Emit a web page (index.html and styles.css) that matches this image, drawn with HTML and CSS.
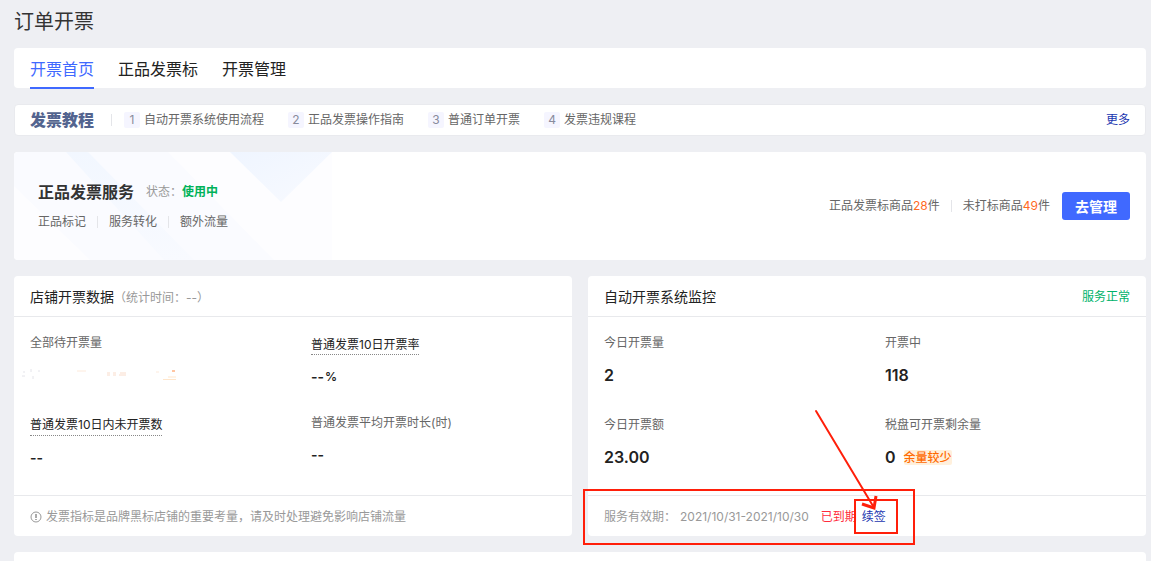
FILE: index.html
```html
<!DOCTYPE html>
<html lang="zh-CN">
  <head>
    <meta charset="utf-8">
    <title>订单开票</title>
    <link rel="stylesheet" href="styles.css">
  </head>
  <body>
    <h1 class="page-title">订单开票</h1>

    <nav class="tabs card">
      <a href="#" class="tab active">开票首页</a>
      <a href="#" class="tab">正品发票标</a>
      <a href="#" class="tab">开票管理</a>
    </nav>

    <div class="guide card">
      <span class="guide-title">发票教程</span>
      <span class="divider guide-divider"></span>
      <div class="guide-list">
        <a href="#" class="guide-item"><span class="guide-number">1</span>自动开票系统使用流程</a>
        <a href="#" class="guide-item"><span class="guide-number">2</span>正品发票操作指南</a>
        <a href="#" class="guide-item"><span class="guide-number">3</span>普通订单开票</a>
        <a href="#" class="guide-item"><span class="guide-number">4</span>发票违规课程</a>
      </div>
      <a href="#" class="link">更多</a>
    </div>

    <section class="service card">
      <svg class="service-art" width="318" height="108" viewBox="0 0 318 108" aria-hidden="true">
        <defs>
          <linearGradient id="band" x1="0" y1="0" x2="0" y2="1">
            <stop offset="0" stop-color="#f2f7ff"/>
            <stop offset="1" stop-color="#f8faff"/>
          </linearGradient>
          <linearGradient id="corner" x1="0" y1="0" x2="1" y2="1">
            <stop offset="0" stop-color="#eff5ff"/>
            <stop offset="1" stop-color="#f8faff"/>
          </linearGradient>
        </defs>
        <path d="M0 0H318V108H0Z" fill="#fdfdff"/>
        <path d="M0 0H154L260 108H76L0 34Z" fill="#fafbff"/>
        <path d="M52 0H74L180 108H150Z" fill="url(#band)"/>
        <path d="M216 0H318L267 50Z" fill="url(#corner)"/>
      </svg>
      <div class="service-info">
        <div class="service-head">
          <h2 class="service-title">正品发票服务</h2>
          <span class="muted">状态：</span>
          <span class="status">使用中</span>
        </div>
        <div class="service-tags">
          <span>正品标记</span>
          <span class="divider"></span>
          <span>服务转化</span>
          <span class="divider"></span>
          <span>额外流量</span>
        </div>
      </div>
      <div class="service-count">
        <span>正品发票标商品<span class="orange">28</span>件</span>
        <span class="divider"></span>
        <span>未打标商品<span class="orange">49</span>件</span>
      </div>
      <button class="manage-button">去管理</button>
    </section>

    <div class="panels">
      <section class="panel card">
        <header class="panel-head">
          <h2 class="panel-title">店铺开票数据<span class="panel-note">（统计时间：--）</span></h2>
        </header>
        <div class="panel-body">
          <div class="column">
            <div class="item">
              <div class="label">全部待开票量</div>
              <div class="value">
                <svg class="residue" width="160" height="14" viewBox="0 0 160 14" aria-hidden="true">
                  <path d="M0 8H3M2 5V3M9 1V4M11 8V11M16 3H18" stroke="#e4e4ea" fill="none"/>
                  <path d="M55 3H64M134 4H137" stroke="#fdeadb"/>
                  <path d="M85 5H88M91 5H94M98 5H104M85 7H88M91 7H94M97 7H104" stroke="#f9dccb"/>
                  <path d="M141 11H154V12H141Z" fill="#ffe6cb"/>
                  <path d="M146 9H154" stroke="#fff3e6" stroke-width="2"/>
                  <path d="M150 3H153" stroke="#ff8b45"/>
                </svg>
              </div>
            </div>
            <div class="item">
              <div class="label help">普通发票10日内未开票数</div>
              <div class="value empty">--</div>
            </div>
          </div>
          <div class="column column-low">
            <div class="item">
              <div class="label help">普通发票10日开票率</div>
              <div class="value empty">--<span class="percent">%</span></div>
            </div>
            <div class="item">
              <div class="label">普通发票平均开票时长(时)</div>
              <div class="value empty">--</div>
            </div>
          </div>
        </div>
        <footer class="panel-foot">
          <svg class="info-icon" width="12" height="12" viewBox="0 0 12 12" aria-hidden="true">
            <circle cx="6" cy="6" r="5" fill="none" stroke="#999" stroke-width="1"/>
            <path d="M6 3V7M6 8V9" stroke="#888" stroke-width="1.4"/>
          </svg>
          发票指标是品牌黑标店铺的重要考量，请及时处理避免影响店铺流量
        </footer>
      </section>

      <section class="panel card">
        <header class="panel-head">
          <h2 class="panel-title">自动开票系统监控</h2>
          <span class="status-normal">服务正常</span>
        </header>
        <div class="panel-body">
          <div class="column">
            <div class="item">
              <div class="label">今日开票量</div>
              <div class="value">2</div>
            </div>
            <div class="item">
              <div class="label">今日开票额</div>
              <div class="value">23.00</div>
            </div>
          </div>
          <div class="column">
            <div class="item">
              <div class="label">开票中</div>
              <div class="value">118</div>
            </div>
            <div class="item">
              <div class="label">税盘可开票剩余量</div>
              <div class="value">0<span class="tag">余量较少</span></div>
            </div>
          </div>
        </div>
        <footer class="panel-foot">
          <span>服务有效期：</span>
          <span class="date">2021/10/31-2021/10/30</span>
          <span class="expired">已到期</span>
          <a href="#" class="link">续签</a>
        </footer>
        <!-- red boxes and arrow pointing at the renew link -->
        <svg class="annotation" width="340" height="140" viewBox="0 0 340 140" aria-hidden="true">
          <g fill="none" stroke="#ff1f0a" stroke-width="2">
            <rect x="4" y="82" width="330" height="54"/>
            <rect x="275" y="92" width="42" height="33"/>
            <path d="M236 3L293 98" stroke-linecap="round"/>
            <path d="M282 96L294 100L296 88" stroke-width="3"/>
          </g>
        </svg>
      </section>
    </div>

    <section class="card next-card"></section>
  </body>
</html>
```
FILE: styles.css
```css
* {
  box-sizing: border-box;
}
body {
  display: flex;
  flex-direction: column;
  min-height: 100vh;
  background-color: #eeeff3;
  color: #666;
  font-family: Inter, "Noto Sans CJK SC", sans-serif;
  font-size: 12px;
  line-height: 20px;
  margin: 0;
  padding: 8px 5px 0 14px;
}
h1, h2 {
  margin: 0;
  font-weight: normal;
}
a {
  color: inherit;
  text-decoration: none;
}
.card {
  background-color: white;
  border-radius: 4px;
  margin-bottom: 16px;
}
.page-title {
  color: #333;
  font-size: 20px;
  line-height: 28px;
  margin-bottom: 12px;
}
.tabs {
  display: flex;
  gap: 24px;
  height: 40px;
  padding: 0 16px;
}
.tab {
  color: #222;
  font-size: 16px;
  line-height: 42px;
  height: 41px;
}
.tab.active {
  color: #3f69ff;
  border-bottom: 2px solid #3f69ff;
}
.guide {
  display: flex;
  align-items: center;
  height: 32px;
  padding: 0 15px;
  border: 1px solid #e9eaee;
}
.guide-title {
  color: #53648f;
  font-size: 16px;
  font-weight: 900;
}
.divider {
  width: 1px;
  height: 12px;
  background-color: #e4e5e9;
}
.guide-divider {
  margin: 0 12px 0 17px;
}
.guide-list {
  display: flex;
  flex: 1;
  gap: 24px;
}
.guide-item {
  display: flex;
  align-items: center;
  gap: 4px;
}
.guide-number {
  width: 16px;
  height: 16px;
  line-height: 16px;
  text-align: center;
  color: #888b9c;
  background-color: #f5f5ff;
  border-radius: 2px;
}
.link {
  color: #1a36b0;
}
.service {
  position: relative;
  display: flex;
  align-items: center;
  height: 108px;
  padding: 0 16px 0 24px;
  overflow: hidden;
}
.service-art {
  position: absolute;
  left: 0;
  top: 0;
}
.service-info {
  position: relative;
  flex: 1;
}
.service-head {
  display: flex;
  align-items: center;
  margin-bottom: 8px;
}
.service-title {
  color: #333;
  font-size: 16px;
  font-weight: bold;
  line-height: 24px;
  margin-right: 12px;
}
.muted {
  color: #999;
}
.status {
  color: #00b259;
  font-weight: bold;
}
.service-tags,
.service-count {
  display: flex;
  align-items: center;
  gap: 11px;
}
.service-count {
  margin-right: 12px;
}
.orange {
  color: #ff6a1f;
}
.manage-button {
  width: 68px;
  height: 28px;
  padding: 0;
  border: none;
  border-radius: 3px;
  background-color: #4069ff;
  color: white;
  font-family: inherit;
  font-size: 14px;
  font-weight: bold;
  cursor: pointer;
}
.panels {
  display: grid;
  grid-template-columns: 1fr 1fr;
  gap: 16px;
}
.panel {
  position: relative;
  display: flex;
  flex-direction: column;
}
.panel-head {
  display: flex;
  align-items: center;
  justify-content: space-between;
  height: 41px;
  padding: 2px 16px 0;
  border-bottom: 1px solid #e8e9ec;
}
.panel-title {
  color: #222;
  font-size: 14px;
}
.panel-note {
  color: #999;
  font-size: 12px;
}
.status-normal {
  color: #00b26a;
}
.panel-body {
  display: grid;
  flex: 1;
  grid-template-columns: 1fr 1fr;
  column-gap: 36px;
  padding: 16px 16px 24px;
}
.column {
  display: flex;
  flex-direction: column;
  gap: 27px;
}
.column-low {
  padding-top: 3px;
  gap: 23px;
}
.label.help {
  width: fit-content;
  color: #222;
  border-bottom: 1px dotted #888;
}
.column-low .help {
  line-height: 18px;
}
.value {
  display: flex;
  align-items: center;
  height: 26px;
  margin-top: 9px;
  color: #222;
  font-size: 16px;
  font-weight: 600;
}
.value.empty {
  font-size: 14px;
}
.residue {
  margin-left: -8px;
}
.percent {
  margin-left: 1px;
  font-size: 12px;
}
.tag {
  margin-left: 8px;
  color: #ff6a00;
  background-color: #fff0dc;
  border-radius: 2px;
  font-size: 12px;
  font-weight: 500;
  line-height: 15px;
}
.panel-foot {
  display: flex;
  align-items: center;
  height: 41px;
  padding: 2px 16px 0;
  border-top: 1px solid #e8e9ec;
  color: #999;
}
.info-icon {
  margin-right: 4px;
}
.date {
  margin: 0 12px 0 4px;
}
.expired {
  color: #ff2b3d;
  margin-right: 5px;
}
.annotation {
  position: absolute;
  left: -8px;
  bottom: -12px;
  pointer-events: none;
}
.next-card {
  flex: 1;
  margin-bottom: 0;
  border-radius: 4px 4px 0 0;
}
```
